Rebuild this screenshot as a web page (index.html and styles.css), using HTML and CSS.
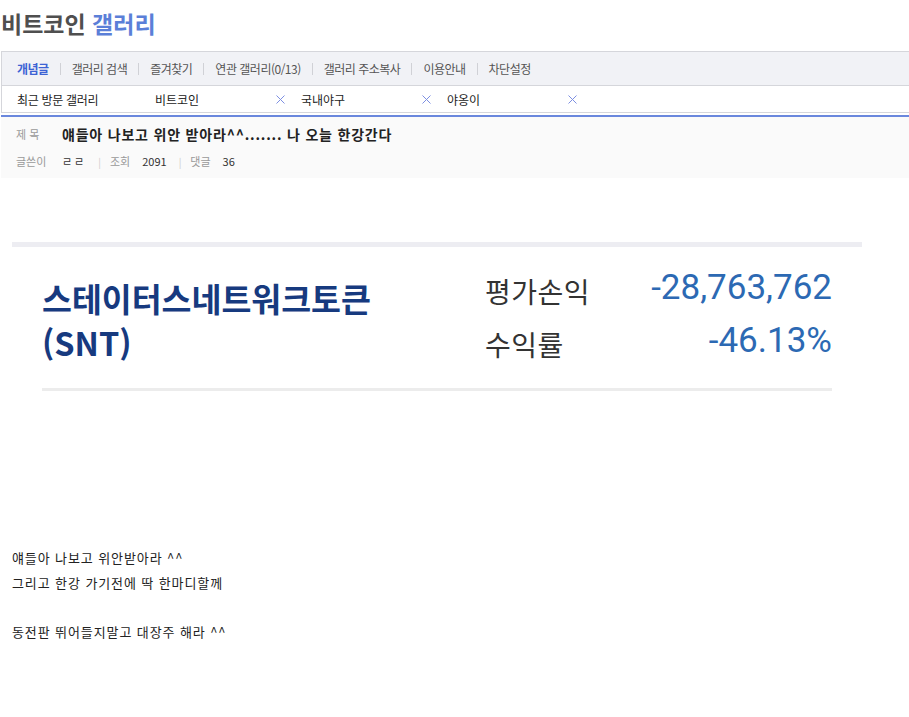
FILE: index.html
```html
<!DOCTYPE html>
<html lang="ko">
<head>
<meta charset="utf-8">
<title>비트코인 갤러리</title>
<link rel="stylesheet" href="styles.css">
</head>
<body>
<h2 class="gall-title"><span class="gt-name">비트코인</span> <span class="gt-gall">갤러리</span></h2>

<div class="nav-box">
  <ul class="nav-row">
    <li class="nav-item active">개념글</li>
    <li class="nav-sep"></li>
    <li class="nav-item">갤러리 검색</li>
    <li class="nav-sep"></li>
    <li class="nav-item">즐겨찾기</li>
    <li class="nav-sep"></li>
    <li class="nav-item">연관 갤러리(0/13)</li>
    <li class="nav-sep"></li>
    <li class="nav-item">갤러리 주소복사</li>
    <li class="nav-sep"></li>
    <li class="nav-item">이용안내</li>
    <li class="nav-sep"></li>
    <li class="nav-item">차단설정</li>
  </ul>
  <div class="recent-row">
    <span class="recent-label">최근 방문 갤러리</span>
    <ul class="recent-list">
      <li class="recent-item"><span>비트코인</span><svg class="x-icon" viewBox="0 0 9 9"><path d="M0.5 0.5L8.5 8.5M8.5 0.5L0.5 8.5"/></svg></li>
      <li class="recent-item"><span>국내야구</span><svg class="x-icon" viewBox="0 0 9 9"><path d="M0.5 0.5L8.5 8.5M8.5 0.5L0.5 8.5"/></svg></li>
      <li class="recent-item"><span>야옹이</span><svg class="x-icon" viewBox="0 0 9 9"><path d="M0.5 0.5L8.5 8.5M8.5 0.5L0.5 8.5"/></svg></li>
    </ul>
  </div>
</div>
<div class="blue-bar"></div>

<div class="post-head">
  <div class="ph-row ph-title">
    <span class="ph-label">제 목</span>
    <span class="ph-subject">얘들아 나보고 위안 받아라^^....... 나 오늘 한강간다</span>
  </div>
  <div class="ph-row ph-info">
    <span class="ph-label">글쓴이</span>
    <span class="ph-val ph-nick">ㄹㄹ</span>
    <span class="ph-sep">|</span>
    <span class="ph-lab2">조회</span>
    <span class="ph-val">2091</span>
    <span class="ph-sep">|</span>
    <span class="ph-lab2">댓글</span>
    <span class="ph-val">36</span>
  </div>
</div>

<div class="shot">
  <div class="shot-band"></div>
  <div class="shot-body">
    <div class="coin-name">스테이터스네트워크토큰<br>(SNT)</div>
    <div class="coin-stats">
      <div class="stat"><span class="stat-label">평가손익</span><span class="stat-val">-28,763,762</span></div>
      <div class="stat"><span class="stat-label">수익률</span><span class="stat-val">-46.13%</span></div>
    </div>
  </div>
  <div class="shot-line"></div>
</div>

<div class="post-text">
  <p>얘들아 나보고 위안받아라 ^^</p>
  <p>그리고 한강 가기전에 딱 한마디할께</p>
  <p>&nbsp;</p>
  <p>동전판 뛰어들지말고 대장주 해라 ^^</p>
</div>
</body>
</html>
```

FILE: styles.css
```css
* { box-sizing: border-box; }
body {
  margin: 0;
  background: #fff;
  font-family: "Noto Sans CJK KR", "Noto Sans", sans-serif;
  color: #333;
}
ul { list-style: none; margin: 0; padding: 0; }
p { margin: 0; }

.gall-title {
  margin: 0;
  height: 51px;
  padding: 7px 0 0 1px;
  font-size: 23px;
  font-weight: 700;
  line-height: 32px;
}
.gt-name { color: #4f4f4f; }
.gt-gall { color: #5b7fd8; }

.nav-box {
  margin-left: 1px;
  border-top: 1px solid #d5d6db;
  border-left: 1px solid #d5d6db;
}
.nav-row {
  display: flex;
  align-items: center;
  height: 34px;
  padding-left: 15px;
  background: #f1f2f6;
  border-bottom: 1px solid #d5d6db;
  font-size: 12px;
  color: #555;
  letter-spacing: -0.5px;
}
.nav-item.active { color: #3d63d4; font-weight: 700; }
.nav-sep {
  width: 1px;
  height: 12px;
  background: #d0d1d6;
  margin: 0 11px;
}
.recent-row {
  display: flex;
  align-items: center;
  height: 27px;
  padding-left: 15px;
  border-bottom: 1px solid #d5d6db;
  font-size: 12px;
  color: #222;
}
.recent-label { width: 138px; letter-spacing: -0.3px; }
.recent-list { display: flex; gap: 16px; }
.recent-item {
  display: flex;
  align-items: center;
  justify-content: space-between;
  width: 130px;
}
.x-icon {
  width: 9px;
  height: 9px;
  stroke: #7d8fe2;
  stroke-width: 1;
  fill: none;
}
.blue-bar {
  height: 2px;
  margin: 2px 0 0 1px;
  background: #6a87dd;
}

.post-head {
  margin-left: 1px;
  height: 61px;
  padding: 6px 0 0 15px;
  background: #fafafa;
}
.ph-row { display: flex; align-items: center; }
.ph-title { height: 22px; }
.ph-info { height: 24px; margin-top: 4px; font-size: 11px; }
.ph-label { width: 46px; color: #999; font-size: 11px; }
.ph-subject {
  font-size: 14px;
  font-weight: 700;
  color: #222;
  letter-spacing: 0.8px;
}
.ph-val { color: #333; }
.ph-nick { letter-spacing: 2px; }
.ph-sep { color: #ccc; margin: 0 9px 0 12px; font-size: 10px; }
.ph-lab2 { color: #999; margin-right: 12px; }

.shot {
  margin: 64px 0 0 12px;
  width: 850px;
  height: 290px;
}
.shot-band { height: 5px; background: #ededf2; }
.shot-body {
  display: flex;
  justify-content: space-between;
  padding: 14px 30px 0 30px;
  height: 141px;
}
.coin-name {
  font-size: 32.5px;
  font-weight: 700;
  color: #173a7f;
  line-height: 44px;
  padding-top: 15px;
}
.coin-stats { width: 347px; }
.stat {
  display: flex;
  justify-content: space-between;
  align-items: center;
  height: 53px;
}
.stat-label {
  font-size: 28px;
  line-height: 1;
  color: #333;
  letter-spacing: 0.5px;
  padding-top: 6px;
}
.stat-val {
  font-family: Roboto, "Noto Sans", sans-serif;
  font-size: 35px;
  line-height: 1;
  color: #2c69b3;
}
.shot-line {
  margin: 0 30px;
  height: 3px;
  background: #ececec;
}

.post-text {
  margin-top: 14px;
  padding-left: 12px;
  font-size: 13px;
  letter-spacing: 0.9px;
  line-height: 24.5px;
  color: #222;
}
```
